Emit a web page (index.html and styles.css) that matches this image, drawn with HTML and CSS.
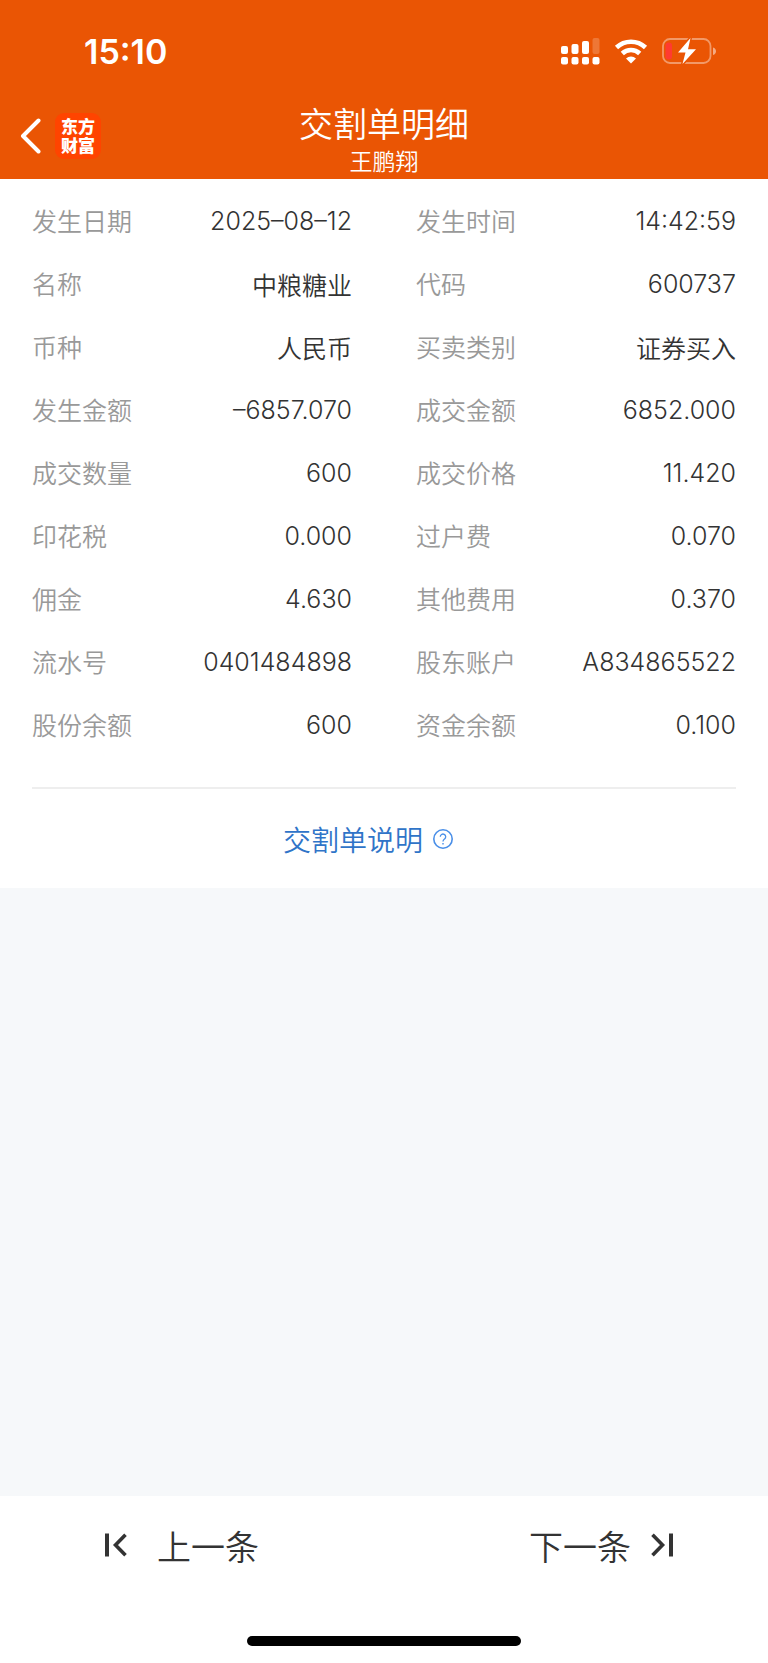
FILE: index.html
```html
<!DOCTYPE html>
<html lang="zh-CN">
<head>
  <meta charset="UTF-8">
  <meta name="viewport" content="width=device-width, initial-scale=1.0">
  <title>交割单明细</title>
  <link rel="stylesheet" href="styles.css">
</head>
<body>

  <header class="header">
    <!-- Status bar -->
    <div class="status-bar">
      <span class="time">15:10</span>
      <div class="status-icons">
        <svg class="signal" width="39" height="28" viewBox="0 0 39 28" fill="#fff" aria-hidden="true">
          <rect x="0" y="9" width="7" height="8" rx="2"/>
          <rect x="10.500" y="7" width="7" height="10" rx="2"/>
          <rect x="21" y="4" width="7" height="13" rx="2"/>
          <rect x="31.500" y="1" width="7" height="16" rx="2" opacity="0.2"/>
          <rect x="0" y="20" width="7" height="7.500" rx="2"/>
          <rect x="10.500" y="20" width="7" height="7.500" rx="2"/>
          <rect x="21" y="20" width="7" height="7.500" rx="2"/>
          <rect x="31.500" y="20" width="7" height="7.500" rx="2"/>
        </svg>
        <svg class="wifi" width="34" height="28" viewBox="0 0 34 28" aria-hidden="true">
          <g fill="none" stroke="#fff" stroke-width="4.600">
            <path d="M2.500 10.500a21 21 0 0 1 29 0"/>
            <path d="M8.300 16.500a12.600 12.600 0 0 1 17.400 0"/>
          </g>
          <path d="M17 26.500l-5-5a7.200 7.200 0 0 1 10 0z" fill="#fff"/>
        </svg>
        <svg class="battery" width="55" height="28" viewBox="0 0 55 28" aria-hidden="true">
          <rect x="1" y="2" width="47.500" height="24" rx="7" fill="none" stroke="#fff" stroke-width="1.800" opacity="0.4"/>
          <path d="M51 10.500q3 1 3 3.800t-3 3.800z" fill="#fff" opacity="0.5"/>
          <rect x="3.500" y="5.500" width="6.500" height="17" rx="3" fill="#ff3b30"/>
          <path d="M28.500 1L16 15.500h7.500L20.500 27 34 12.300h-8z" fill="#fff" stroke="#ea5504" stroke-width="3" stroke-linejoin="round" paint-order="stroke"/>
        </svg>
      </div>
    </div>

    <!-- Title bar -->
    <div class="nav-bar">
      <div class="nav-left">
        <button class="back-button" type="button" aria-label="返回">
          <svg width="22" height="36" viewBox="0 0 22 36" aria-hidden="true">
            <path d="M18.500 2.500L3 18l15.500 15.500" fill="none" stroke="#fff" stroke-width="4" stroke-linecap="round" stroke-linejoin="round"/>
          </svg>
        </button>
        <div class="logo">东方<br>财富</div>
      </div>
      <div class="nav-title">
        <h1>交割单明细</h1>
        <p>王鹏翔</p>
      </div>
    </div>
  </header>

  <main class="content">
    <section class="card">
      <table class="detail">
        <colgroup>
          <col class="col-label"><col class="col-value">
          <col class="col-label"><col class="col-value">
        </colgroup>
        <tr>
          <th scope="row">发生日期</th><td>2025–08–12</td>
          <th scope="row">发生时间</th><td>14:42:59</td>
        </tr>
        <tr>
          <th scope="row">名称</th><td>中粮糖业</td>
          <th scope="row">代码</th><td>600737</td>
        </tr>
        <tr>
          <th scope="row">币种</th><td>人民币</td>
          <th scope="row">买卖类别</th><td>证券买入</td>
        </tr>
        <tr>
          <th scope="row">发生金额</th><td>–6857.070</td>
          <th scope="row">成交金额</th><td>6852.000</td>
        </tr>
        <tr>
          <th scope="row">成交数量</th><td>600</td>
          <th scope="row">成交价格</th><td>11.420</td>
        </tr>
        <tr>
          <th scope="row">印花税</th><td>0.000</td>
          <th scope="row">过户费</th><td>0.070</td>
        </tr>
        <tr>
          <th scope="row">佣金</th><td>4.630</td>
          <th scope="row">其他费用</th><td>0.370</td>
        </tr>
        <tr>
          <th scope="row">流水号</th><td>0401484898</td>
          <th scope="row">股东账户</th><td>A834865522</td>
        </tr>
        <tr>
          <th scope="row">股份余额</th><td>600</td>
          <th scope="row">资金余额</th><td>0.100</td>
        </tr>
      </table>

      <div class="help">
        <a class="help-link" href="#">
          交割单说明
          <svg width="20" height="20" viewBox="0 0 20 20" fill="none" stroke="#4a8fe8" aria-hidden="true">
            <circle cx="10" cy="10" r="9.200" stroke-width="1.600"/>
            <path d="M7.300 7.800a2.700 2.700 0 1 1 4.300 2.100c-1 .8-1.600 1.200-1.600 2.500" stroke-width="1.300"/>
            <path d="M10 14v1.500" stroke-width="1.400"/>
          </svg>
        </a>
      </div>
    </section>
  </main>

  <footer class="footer">
    <div class="pager">
      <button class="pager-button prev" type="button">
        <svg width="22" height="24" viewBox="0 0 22 24" fill="none" stroke="#333" aria-hidden="true">
          <path d="M2 0.500v23" stroke-width="4"/>
          <path d="M20.500 1.800L10.500 12l10 10.200" stroke-width="3.600"/>
        </svg>
        上一条
      </button>
      <button class="pager-button next" type="button">
        下一条
        <svg width="22" height="24" viewBox="0 0 22 24" fill="none" stroke="#333" aria-hidden="true">
          <path d="M20 0.500v23" stroke-width="4"/>
          <path d="M1.500 1.800L11.500 12l-10 10.200" stroke-width="3.600"/>
        </svg>
      </button>
    </div>
    <div class="home-bar"></div>
  </footer>

</body>
</html>
```

FILE: styles.css
```css
* {
  box-sizing: border-box;
}

body {
  margin: 0;
  min-height: 100vh;
  display: flex;
  flex-direction: column;
  background: #f6f8fa;
  color: #333;
  font-family: Inter, "Noto Sans CJK SC", sans-serif;
  font-weight: 350;
}

button {
  padding: 0;
  border: none;
  background: none;
  color: inherit;
  font-family: inherit;
  font-weight: inherit;
  cursor: pointer;
}

svg {
  display: block;
}

/* header */
.header {
  background: #ea5504;
  color: #fff;
}

.status-bar {
  height: 102px;
  padding: 0 51px 0 84px;
  display: flex;
  justify-content: space-between;
  align-items: center;
}

.time {
  font-size: 34px;
  font-weight: 600;
}

.status-icons {
  display: flex;
  align-items: center;
  gap: 14px;
}

.nav-bar {
  height: 77px;
  display: grid;
  grid-template-columns: 1fr auto 1fr;
}

.nav-left {
  display: flex;
  align-items: center;
  gap: 13px;
  padding: 0 0 10px 20px;
}

.logo {
  width: 46px;
  height: 46px;
  padding-top: 5px;
  border-radius: 9px;
  background: #ff4400;
  font-size: 17px;
  font-weight: 900;
  line-height: 19px;
  text-align: center;
}

.nav-title {
  text-align: center;
}

.nav-title h1 {
  margin: 0;
  font-size: 34px;
  font-weight: 350;
  line-height: 46px;
}

.nav-title p {
  margin: 0;
  font-size: 23px;
  line-height: 28px;
}

/* detail card */
.content {
  flex: 1;
}

.card {
  padding: 10px 32px 0;
  background: #fff;
}

.detail {
  width: 100%;
  border-collapse: collapse;
  table-layout: fixed;
  font-size: 25px;
}

.col-label {
  width: 20%;
}

.col-value {
  width: 30%;
}

.detail th,
.detail td {
  height: 63px;
  padding: 0;
  font-weight: 350;
  white-space: nowrap;
}

.detail th {
  padding-bottom: 2px;
  color: #999;
  text-align: left;
}

.detail td {
  text-align: right;
}

/* space between the two halves of a row */
.detail td:nth-child(2) {
  padding-right: 32px;
}

.detail th:nth-child(3) {
  padding-left: 32px;
}

.help {
  height: 101px;
  margin-top: 31px;
  border-top: 2px solid #eee;
  display: flex;
  justify-content: center;
  align-items: center;
}

.help-link {
  display: flex;
  align-items: center;
  gap: 10px;
  margin-right: 32px;
  color: #2f74c8;
  font-size: 28px;
  text-decoration: none;
}

/* footer */
.footer {
  background: #fff;
  padding-bottom: 17px;
}

.pager {
  height: 140px;
  display: flex;
  justify-content: space-between;
  padding: 0 95px 0 105px;
}

.pager-button {
  height: 98px;
  display: flex;
  align-items: center;
  font-size: 34px;
}

.prev {
  gap: 30px;
}

.next {
  gap: 20px;
}

.home-bar {
  width: 274px;
  max-width: 60%;
  height: 10px;
  margin: 0 auto;
  border-radius: 5px;
  background: #000;
}
```
